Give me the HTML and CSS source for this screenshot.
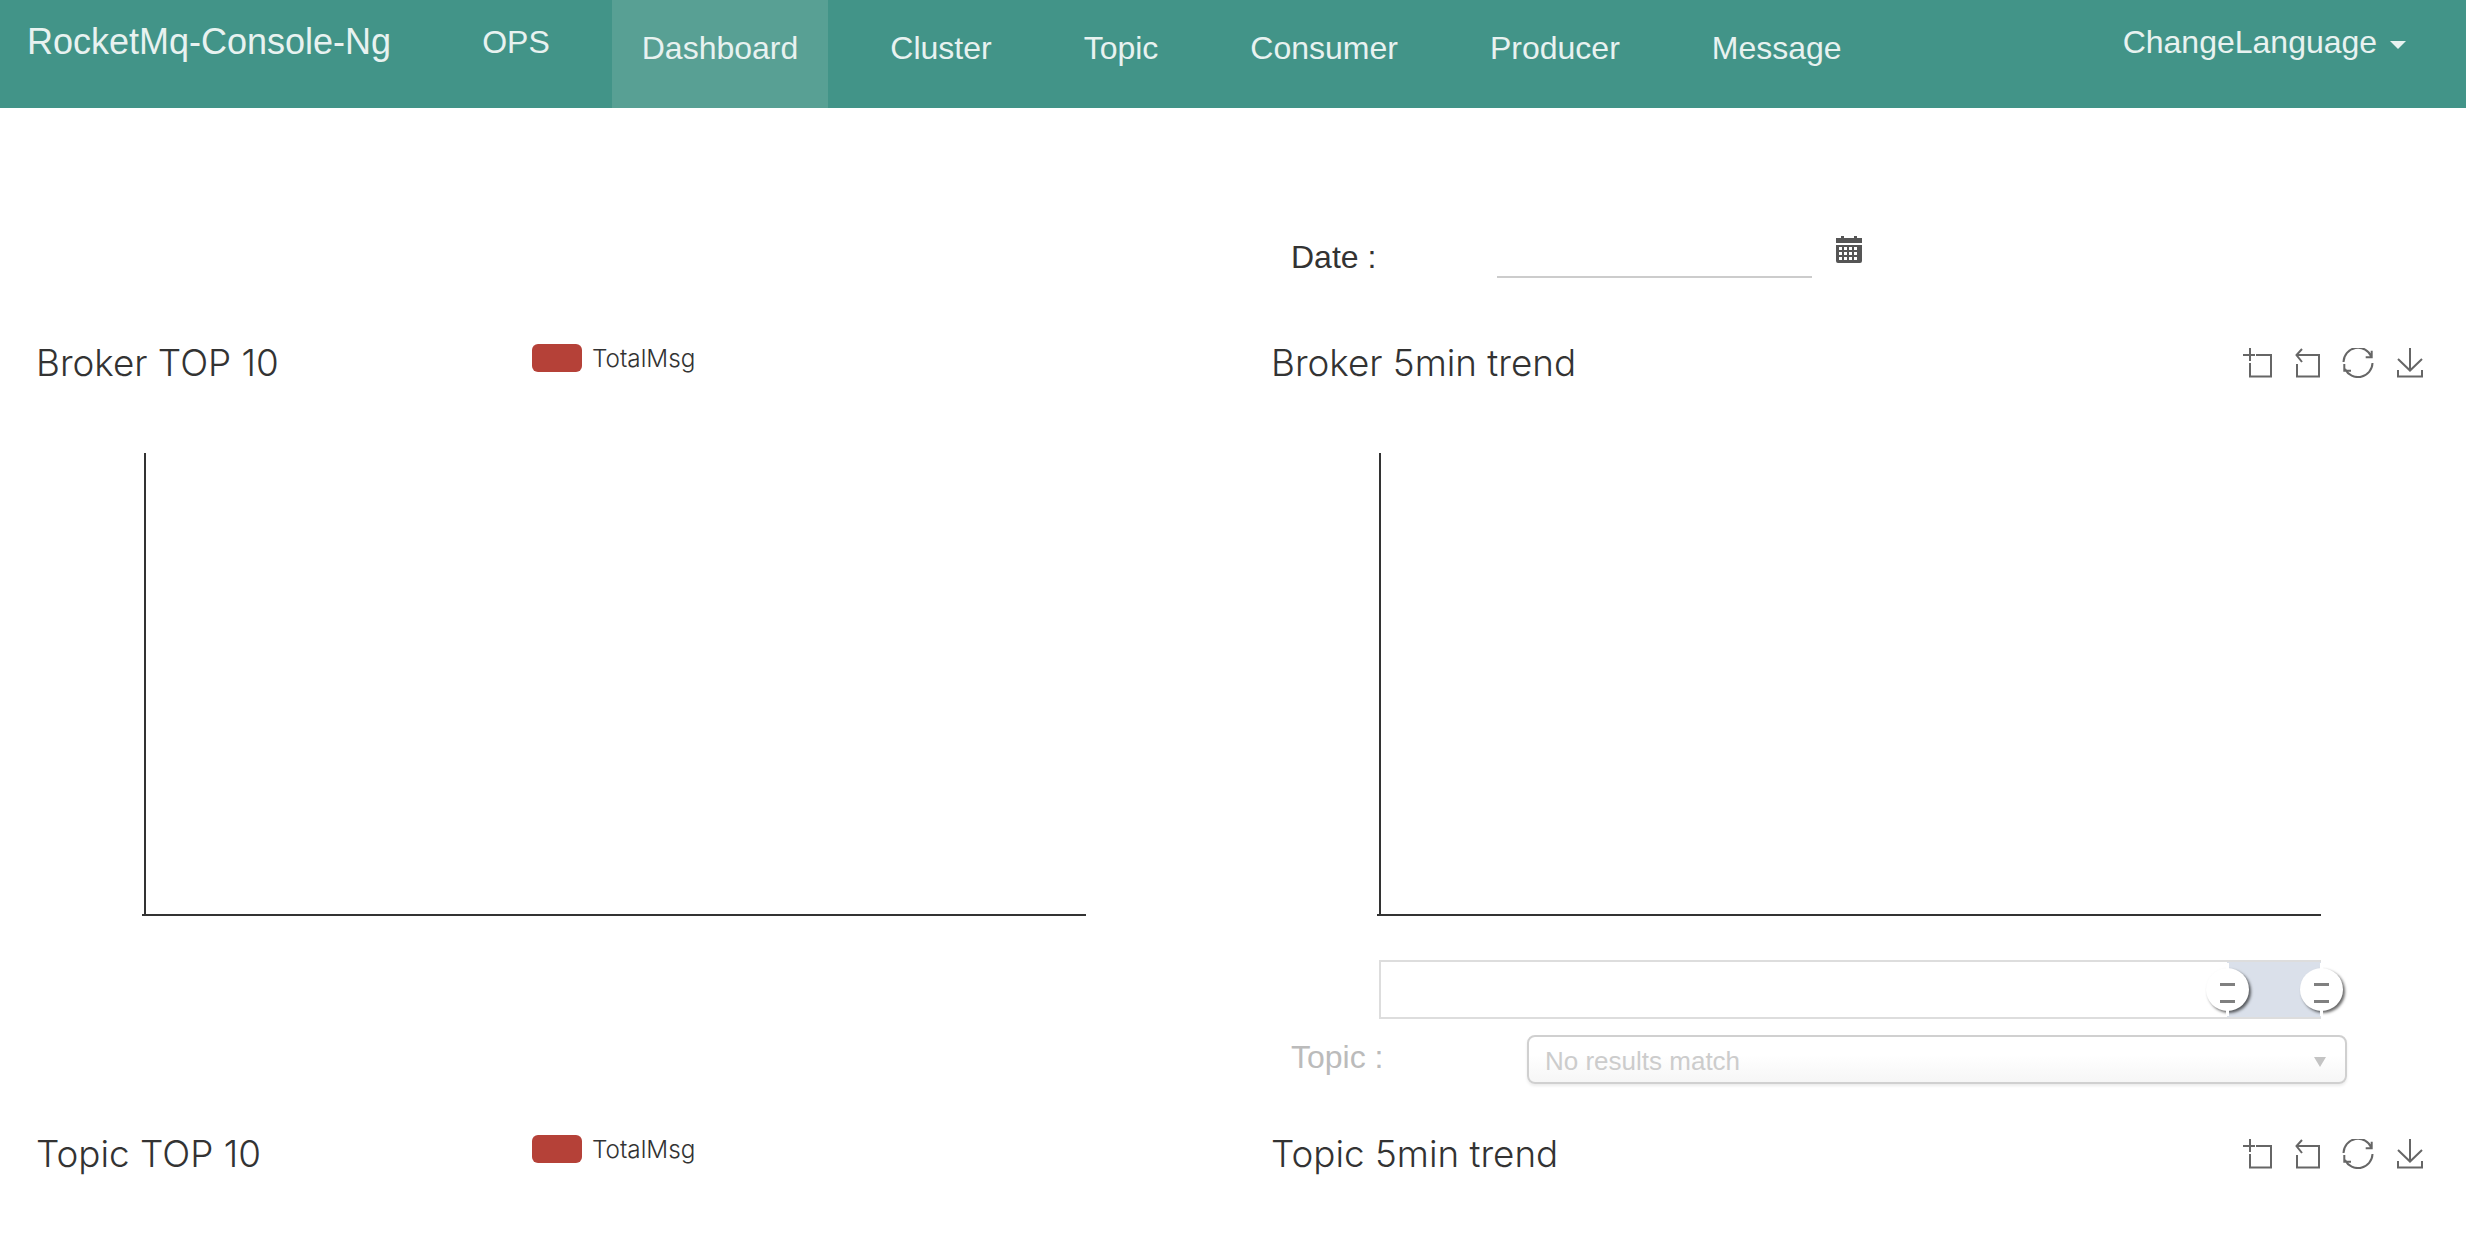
FILE: index.html
```html
<!DOCTYPE html>
<html lang="en">
<head>
    <meta charset="UTF-8">
    <title>RocketMq-Console-Ng</title>
    <link rel="stylesheet" href="styles.css">
</head>
<body>
    <nav class="navbar">
        <a class="brand">RocketMq-Console-Ng</a>
        <a class="nav-item nav-ops">OPS</a>
        <a class="nav-item active">Dashboard</a>
        <a class="nav-item">Cluster</a>
        <a class="nav-item">Topic</a>
        <a class="nav-item">Consumer</a>
        <a class="nav-item">Producer</a>
        <a class="nav-item">Message</a>
        <a class="lang">ChangeLanguage <span class="caret"></span></a>
    </nav>

    <div class="date-row">
        <label class="date-label">Date :</label>
        <div class="date-input"></div>
        <svg class="calendar" width="26" height="28" viewBox="0 0 26 28">
            <path fill="#555" d="M0 3h5V1h3v2h10V1h3v2h5v5H0zM0 10h26v16a2 2 0 0 1-2 2H2a2 2 0 0 1-2-2z"/>
            <g fill="#fff">
                <rect x="3" y="12" width="3" height="3"/><rect x="8" y="12" width="3" height="3"/><rect x="13" y="12" width="3" height="3"/><rect x="18" y="12" width="3" height="3"/>
                <rect x="3" y="17" width="3" height="3"/><rect x="8" y="17" width="3" height="3"/><rect x="13" y="17" width="3" height="3"/><rect x="18" y="17" width="3" height="3"/>
                <rect x="3" y="22" width="3" height="3"/><rect x="8" y="22" width="3" height="3"/><rect x="13" y="22" width="3" height="3"/><rect x="18" y="22" width="3" height="3"/>
            </g>
        </svg>
    </div>

    <div class="charts">
        <section class="chart">
            <div class="chart-head">
                <h3 class="chart-title fixed">Broker TOP 10</h3>
                <div class="legend"><span class="swatch"></span>TotalMsg</div>
            </div>
            <div class="plot"></div>
        </section>

        <section class="chart chart-right">
            <div class="chart-head">
                <h3 class="chart-title">Broker 5min trend</h3>
                <div class="toolbox">
                    <svg class="tool" width="30" height="30" viewBox="0 0 30 30"><path d="M0 7h12M7 0v13M13 7h15v21.500H7V15"/></svg>
                    <svg class="tool" width="25" height="30" viewBox="0 0 25 30"><path d="M7 1L1.500 7 7 14M2 7h22v21.500H2V16"/></svg>
                    <svg class="tool" width="32" height="30" viewBox="0 0 32 30"><path d="M1.500 14A14.500 14.500 0 0 1 29.500 9M30.500 15A14.500 14.500 0 0 1 3 21M23.700 9.300h6V2.700M9 22.700H2.300V16"/></svg>
                    <svg class="tool" width="28" height="30" viewBox="0 0 28 30"><path d="M14 0v23M2 11l12 11.500L26 11M2 22v6.500h24V22"/></svg>
                </div>
            </div>
            <div class="plot"></div>
            <div class="zoom-bar">
                <div class="zoom-range"></div>
                <div class="zoom-handle handle-start"></div>
                <div class="zoom-handle handle-end"></div>
            </div>
            <div class="topic-row">
                <label class="topic-label">Topic :</label>
                <div class="topic-select">No results match<span class="select-arrow"></span></div>
            </div>
        </section>

        <section class="chart">
            <div class="chart-head">
                <h3 class="chart-title fixed">Topic TOP 10</h3>
                <div class="legend"><span class="swatch"></span>TotalMsg</div>
            </div>
        </section>

        <section class="chart chart-right">
            <div class="chart-head">
                <h3 class="chart-title">Topic 5min trend</h3>
                <div class="toolbox">
                    <svg class="tool" width="30" height="30" viewBox="0 0 30 30"><path d="M0 7h12M7 0v13M13 7h15v21.500H7V15"/></svg>
                    <svg class="tool" width="25" height="30" viewBox="0 0 25 30"><path d="M7 1L1.500 7 7 14M2 7h22v21.500H2V16"/></svg>
                    <svg class="tool" width="32" height="30" viewBox="0 0 32 30"><path d="M1.500 14A14.500 14.500 0 0 1 29.500 9M30.500 15A14.500 14.500 0 0 1 3 21M23.700 9.300h6V2.700M9 22.700H2.300V16"/></svg>
                    <svg class="tool" width="28" height="30" viewBox="0 0 28 30"><path d="M14 0v23M2 11l12 11.500L26 11M2 22v6.500h24V22"/></svg>
                </div>
            </div>
        </section>
    </div>
</body>
</html>
```

FILE: styles.css
```css
* {
    box-sizing: border-box;
}
body {
    margin: 0;
    background: #fff;
    font-family: "Liberation Sans", Arial, sans-serif;
    color: #333;
}
.navbar {
    display: flex;
    gap: 32px;
    height: 108px;
    padding-left: 27px;
    background: #429488;
    color: #e8f2f0;
}
.brand {
    font-size: 36px;
    line-height: 84px;
    margin-right: 29px;
}
.nav-item {
    padding: 0 30px;
    font-size: 32px;
    line-height: 96px;
}
.nav-ops {
    line-height: 84px;
}
.nav-item.active {
    background: #58a094;
}
.lang {
    margin-left: auto;
    margin-right: 60px;
    font-size: 32px;
    line-height: 84px;
}
.caret {
    display: inline-block;
    margin-left: 4px;
    vertical-align: middle;
    border-top: 8px solid #e8f2f0;
    border-left: 8px solid transparent;
    border-right: 8px solid transparent;
}
.date-row {
    display: flex;
    align-items: flex-start;
    height: 44px;
    margin-top: 127px;
    padding-left: 1291px;
}
.date-label {
    width: 206px;
    font-size: 32px;
    line-height: 44px;
}
.date-input {
    width: 315px;
    height: 43px;
    border-bottom: 2px solid #ccc;
}
.calendar {
    margin-left: 24px;
}
.charts {
    display: grid;
    grid-template-columns: 1235px 1fr;
    margin-top: 56px;
}
.chart {
    padding-left: 36px;
}
.chart-head {
    display: flex;
    align-items: center;
    height: 56px;
    margin-bottom: 62px;
}
.chart-title {
    margin: -2px 0 0;
    font-family: Inter, sans-serif;
    font-size: 36.800px;
    font-weight: 300;
    color: #333;
}
.chart-title.fixed {
    width: 496px;
}
.legend {
    display: flex;
    align-items: center;
    gap: 10px;
    margin-top: -10px;
    font-family: Inter, sans-serif;
    font-size: 24.300px;
    font-weight: 300;
}
.swatch {
    width: 50px;
    height: 28px;
    border-radius: 6px;
    background: #b54138;
}
.chart-right .chart-head {
    justify-content: space-between;
    padding-right: 42px;
}
.toolbox {
    display: flex;
    gap: 22px;
}
.tool {
    fill: none;
    stroke: #666;
    stroke-width: 2;
}
.plot {
    position: relative;
    width: 942px;
    height: 463px;
    margin-left: 108px;
    border-left: 2px solid #333;
    border-bottom: 2px solid #333;
}
.plot::after {
    content: "";
    position: absolute;
    left: -4px;
    bottom: -2px;
    width: 4px;
    height: 2px;
    background: #333;
}
.zoom-bar {
    position: relative;
    width: 942px;
    height: 59px;
    margin: 44px 0 0 108px;
    border: 2px solid #ddd;
    border-right: none;
}
.zoom-range {
    position: absolute;
    top: 0;
    bottom: 0;
    right: 0;
    width: 94px;
    background: #dae0ea;
}
.zoom-handle {
    position: absolute;
    top: 6px;
    width: 43px;
    height: 43px;
    border-radius: 50%;
    background: #fff;
    box-shadow: 2px 2px 3px rgba(0, 0, 0, 0.6);
}
.zoom-handle::before {
    content: "";
    position: absolute;
    left: 20px;
    top: -5px;
    width: 3px;
    height: 53px;
    background: #fff;
}
.zoom-handle::after {
    content: "";
    position: absolute;
    left: 14px;
    top: 15px;
    width: 15px;
    height: 14px;
    border-top: 3px solid #808080;
    border-bottom: 3px solid #808080;
}
.handle-start {
    right: 72px;
}
.handle-end {
    right: -22px;
}
.topic-row {
    display: flex;
    align-items: flex-start;
    height: 49px;
    margin: 16px 0 42px 20px;
}
.topic-label {
    width: 236px;
    font-size: 32px;
    line-height: 44px;
    color: #bbb;
}
.topic-select {
    position: relative;
    width: 820px;
    height: 49px;
    padding-left: 16px;
    border: 2px solid #d0d0d0;
    border-radius: 8px;
    background: linear-gradient(#fff 40%, #f6f6f6);
    box-shadow: 0 2px 3px rgba(0, 0, 0, 0.08);
    font-size: 26px;
    line-height: 48px;
    color: #ccc;
}
.select-arrow {
    position: absolute;
    top: 20px;
    right: 19px;
    border-top: 10px solid #c4c4c4;
    border-left: 6px solid transparent;
    border-right: 6px solid transparent;
}
```
